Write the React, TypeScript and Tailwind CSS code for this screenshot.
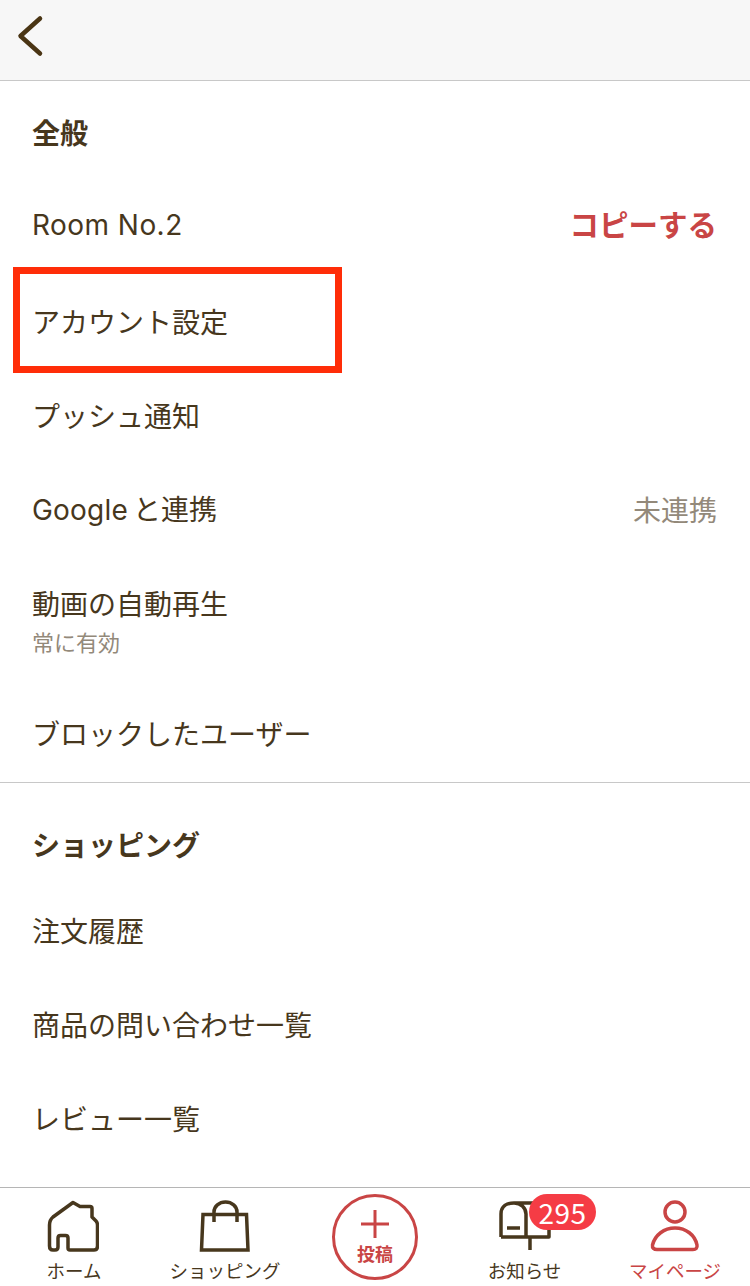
import type { ReactNode } from "react";

function Row({ children, right, className = "h-[94px]" }: { children: ReactNode; right?: ReactNode; className?: string }) {
  return (
    <div className={`relative flex items-center justify-between pl-[32px] pr-[33px] text-[28px] leading-none text-[#47371d] ${className}`}>
      <span>{children}</span>
      {right}
    </div>
  );
}

function NavItem({ icon, label, active, children, labelClass = "" }: { icon: ReactNode; label: string; active?: boolean; children?: ReactNode; labelClass?: string }) {
  return (
    <div className="relative flex flex-col items-center">
      <div className="relative mt-[12px] h-[52px] w-[52px]">
        {icon}
        {children}
      </div>
      <span className={`mt-[8px] whitespace-nowrap text-[18.5px] leading-[20px] ${active ? "text-[#c94545]" : "text-[#47371d]"} ${labelClass}`}>{label}</span>
    </div>
  );
}

const brown = "#47371d";
const red = "#c94545";

export default function App() {
  return (
    <div className="flex h-[1286px] w-[750px] flex-col overflow-hidden bg-white font-['Noto_Sans_CJK_JP','Noto_Sans',sans-serif]">
      <header className="h-[81px] shrink-0 border-b border-[#c8c8c8] bg-[#f7f7f7]">
        <svg width="60" height="72" viewBox="0 0 60 72" fill="none">
          <path d="M40 18.500 L20.500 36 L40 53.500" stroke="#4a3514" strokeWidth="4.500" strokeLinecap="round" strokeLinejoin="round" />
        </svg>
      </header>

      <main className="flex-1 overflow-hidden">
        <Row className="h-[97px] pt-[5px]"><span className="font-bold">全般</span></Row>
        <Row className="h-[94px] pb-[3px]" right={<span className="text-[29.500px] font-bold text-[#c94545]">コピーする</span>}>
          <span className="font-['Inter','Noto_Sans_CJK_JP',sans-serif] tracking-[0.45px]">Room No.2</span>
        </Row>
        <div className="h-[2px]" />
        <Row>
          アカウント設定
          <div className="absolute left-[13px] top-[-7px] h-[106px] w-[329px] border-[7px] border-[#ff2d08]" />
        </Row>
        <Row>プッシュ通知</Row>
        <Row right={<span className="text-[#93897a]">未連携</span>}>
          <span className="font-['Inter','Noto_Sans_CJK_JP',sans-serif] tracking-[0.2px]">Google</span>
          <span className="ml-[5px]">と連携</span>
        </Row>
        <div className="h-[130px] pl-[32px] pt-[33px] text-[#47371d]">
          <div className="text-[28px] leading-[28px]">動画の自動再生</div>
          <div className="mt-[13px] text-[22px] leading-[22px] text-[#93897a]">常に有効</div>
        </div>
        <Row className="h-[96px] pb-[2px]">ブロックしたユーザー</Row>
        <div className="h-px bg-[#c8c8c8]" />
        <Row className="h-[100px] pt-[21px]"><span className="font-bold">ショッピング</span></Row>
        <Row>注文履歴</Row>
        <Row>商品の問い合わせ一覧</Row>
        <Row>レビュー一覧</Row>
      </main>

      <nav className="grid h-[99px] shrink-0 grid-cols-5 border-t border-[#b5b5b5]">
        <NavItem
          label="ホーム"
          labelClass="-ml-[2px]"
          icon={
            <svg className="-ml-[2px]" width="52" height="52" viewBox="0 0 52 52" fill="none" stroke={brown} strokeWidth="3.500" strokeLinejoin="round">
              <path d="M26 2.500 L33 6.500 H43 Q45 6.500 45 8.500 V17 L49 21 Q50.500 22.500 50.500 25 V46 Q50.500 50 47 50 H23 Q21 50 21 48 V38 Q21 35.500 18.500 35.500 H13.500 Q11 35.500 11 38 V47 Q11 50 8 50 H6 Q2.500 50 2.500 46 V25 Q2.500 20 6 17 Z" />
            </svg>
          }
        />
        <NavItem
          label="ショッピング"
          icon={
            <svg width="52" height="52" viewBox="0 0 52 52" fill="none" stroke={brown} strokeWidth="3.500">
              <path d="M4 14.500 H47.500 L49 50 H2.500 Z" />
              <path d="M15 22 V12 A11.500 10 0 0 1 38 12 V22" />
            </svg>
          }
        />
        <div className="flex flex-col items-center">
          <div className="mt-[6px] flex h-[86px] w-[86px] flex-col items-center rounded-full border-[3.500px] border-[#c94545]">
            <svg className="mt-[12px]" width="30" height="30" viewBox="0 0 30 30" fill="none" stroke={red} strokeWidth="3">
              <path d="M15 1 V29 M1 15 H29" />
            </svg>
            <span className="mt-[4px] text-[18px] font-bold leading-[20px] text-[#c94545]">投稿</span>
          </div>
        </div>
        <NavItem
          label="お知らせ"
          labelClass="-ml-[1px]"
          icon={
            <svg width="52" height="52" viewBox="0 0 52 52" fill="none" stroke={brown} strokeWidth="3.500" strokeLinejoin="round">
              <path d="M2 37 V14 C2 6 8 3 15 3 H45 M15 3 C22 3 27 8 27 14 V37 H2 M27 37 H50 V30" />
              <path d="M8 28 H21" />
              <path d="M31 37 V50" />
            </svg>
          }
        >
          <span className="absolute left-[30px] top-[-6px] flex h-[36px] w-[67px] items-center justify-center rounded-full bg-[#f53c45] text-[28px] leading-none tracking-[0.5px] text-white">295</span>
        </NavItem>
        <NavItem
          label="マイページ"
          active
          icon={
            <svg width="52" height="52" viewBox="0 0 52 52" fill="none" stroke={red} strokeWidth="3.500">
              <circle cx="26" cy="12" r="10" />
              <path d="M3.500 45 C6 35 15 28 26 28 C37 28 46 35 48 45 C48.500 48 47 49.500 44 49.500 H8 C5 49.500 3 48 3.500 45 Z" />
            </svg>
          }
        />
      </nav>
    </div>
  );
}
